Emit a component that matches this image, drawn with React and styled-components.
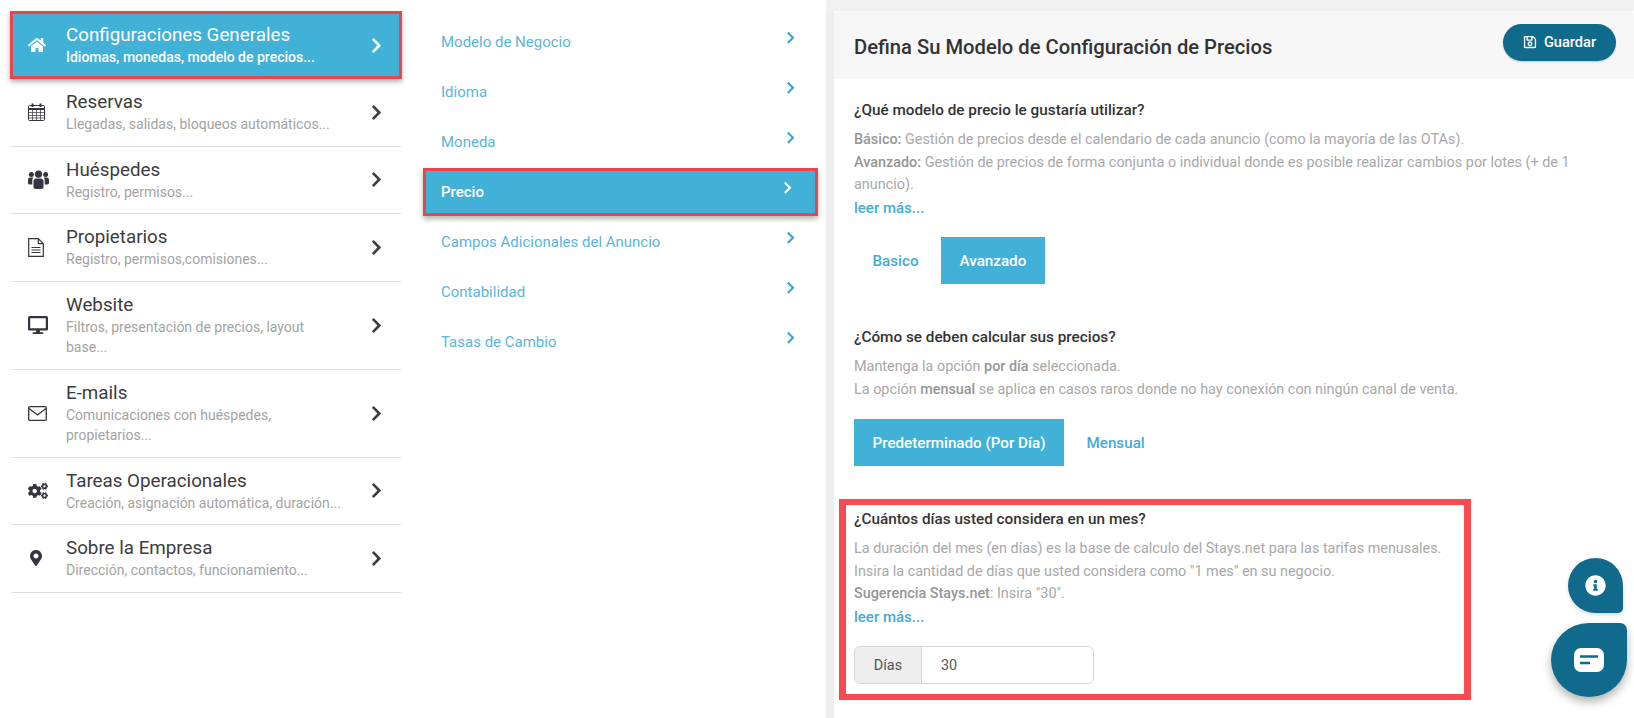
import React from 'react';
import styled, { createGlobalStyle } from 'styled-components';
import {
  FaHome,
  FaDesktop,
  FaCogs,
  FaMapMarkerAlt,
  FaChevronRight,
  FaRegSave,
  FaInfoCircle,
} from 'react-icons/fa';

const GlobalStyle = createGlobalStyle`
  html, body {
    margin: 0;
    background: #fff;
    font-family: Roboto, "Liberation Sans", sans-serif;
  }
  * { box-sizing: border-box; }
`;

const Page = styled.div`
  display: flex;
  height: 718px;
  overflow: hidden;
`;

const MainNav = styled.nav`
  width: 392px;
  margin: 11px 0 0 10px;
  flex: none;
`;

const NavRow = styled.div`
  display: flex;
  align-items: center;
  padding: ${(p) => (p.$active ? '8px 0' : '11px 0')};
  height: ${(p) => (p.$active ? '68px' : 'auto')};
  background: ${(p) => (p.$active ? '#42b1d8' : 'transparent')};
  color: ${(p) => (p.$active ? '#fff' : '#3c3c3c')};
  border: ${(p) => (p.$active ? '3px solid #e8454d' : 'none')};
  border-bottom: ${(p) => (p.$active ? '3px solid #e8454d' : '1px solid #dedede')};
  margin: 0 ${(p) => (p.$active ? '0' : '1px')};
  box-shadow: ${(p) => (p.$active ? '0 3px 5px rgba(0, 0, 0, 0.3)' : 'none')};
`;

const NavIcon = styled.div`
  width: ${(p) => (p.$active ? '53px' : '55px')};
  padding-left: ${(p) => (p.$active ? '15px' : '17px')};
  flex: none;
  display: flex;
  align-items: center;
  font-size: 18px;
  color: ${(p) => (p.$active ? '#fff' : '#35353f')};
`;

const NavText = styled.div`
  flex: 1;
  max-width: 280px;
`;

const NavTitle = styled.div`
  font-size: 18.8px;
  line-height: 24px;
`;

const NavSub = styled.div`
  font-size: 14px;
  line-height: 20.5px;
  color: ${(p) => (p.$active ? '#fff' : '#a3a3a3')};
  font-weight: ${(p) => (p.$active ? 500 : 400)};
`;

const NavArrow = styled.div`
  margin-left: auto;
  padding-right: ${(p) => (p.$active ? '14px' : '16px')};
  display: flex;
  font-size: 17px;
`;

const SubNav = styled.nav`
  width: 395px;
  margin: 18px 0 0 21px;
  flex: none;
`;

const SubRow = styled.div`
  height: 48px;
  margin-bottom: 2px;
  display: flex;
  align-items: center;
  justify-content: space-between;
  padding: 0 21px 0 ${(p) => (p.$active ? '15px' : '18px')};
  font-size: 15px;
  color: ${(p) => (p.$active ? '#fff' : '#5bb5d8')};
  font-weight: ${(p) => (p.$active ? 500 : 400)};
  background: ${(p) => (p.$active ? '#42b1d8' : 'transparent')};
  border: ${(p) => (p.$active ? '3px solid #e8454d' : 'none')};
  box-shadow: ${(p) => (p.$active ? '0 3px 5px rgba(0, 0, 0, 0.3)' : 'none')};
`;

const SubArrow = styled.span`
  display: flex;
  font-size: 13.5px;
  margin-top: -8px;
  color: ${(p) => (p.$active ? '#fff' : '#3ba5cc')};
`;

const Panel = styled.main`
  flex: 1;
  margin-left: 8px;
  padding: 11px 0 0 8px;
  background: linear-gradient(#f0f0f0 0 11px, transparent 11px),
    linear-gradient(90deg, #eeeeee 0 8px, #fff 8px);
`;

const CardHeader = styled.header`
  height: 68px;
  background: #f7f7f7;
  border-radius: 4px 4px 0 0;
  display: flex;
  align-items: center;
  justify-content: space-between;
  padding: 0 18px 0 20px;
`;

const CardTitle = styled.h1`
  margin: 3px 0 0;
  font-size: 20.2px;
  font-weight: 500;
  color: #333;
`;

const SaveButton = styled.button`
  width: 113px;
  height: 37px;
  margin-top: -6px;
  border: none;
  border-radius: 19px;
  background: #0f6a8c;
  color: #fff;
  display: flex;
  align-items: center;
  justify-content: center;
  gap: 7px;
  font: 500 14.6px Roboto, sans-serif;
  box-shadow: 0 1px 2px rgba(0, 0, 0, 0.2);
`;

const CardBody = styled.div`
  padding: 20px 0 0 20px;
`;

const Section = styled.section`
  margin-bottom: 42px;
`;

const HighlightSection = styled.section`
  width: 632px;
  height: 201px;
  margin: -9px 0 0 -15px;
  border: 6px solid #f94a4f;
  border-width: 6px 7px;
  padding: 3px 0 0 8px;
`;

const Question = styled.h3`
  margin: 0 0 8px;
  font-size: 15.3px;
  line-height: 22px;
  font-weight: 500;
  color: #333;
`;

const Help = styled.p`
  margin: 0;
  font-size: 14.4px;
  line-height: 22.5px;
  color: #a8a8a8;
  white-space: nowrap;

  b {
    font-weight: 500;
    color: #969696;
  }
`;

const ReadMore = styled.a`
  display: block;
  font-size: 15px;
  line-height: 22.5px;
  font-weight: 500;
  color: #45abd2;
`;

const Choices = styled.div`
  display: flex;
  gap: 4px;
  margin-top: 18px;
`;

const Choice = styled.button`
  height: 47px;
  padding: 0 18.5px;
  border: none;
  background: ${(p) => (p.$selected ? '#42b1d8' : 'transparent')};
  color: ${(p) => (p.$selected ? '#fff' : '#45abd2')};
  font: 500 15.2px Roboto, sans-serif;
`;

const InputGroup = styled.div`
  display: flex;
  width: 240px;
  height: 38px;
  margin-top: 18px;
  border: 1px solid #d6d6d6;
  border-radius: 6px;
  overflow: hidden;
  font-size: 14.4px;
  color: #555;
`;

const Addon = styled.span`
  width: 67px;
  display: flex;
  align-items: center;
  justify-content: center;
  background: #eeeeee;
  border-right: 1px solid #d6d6d6;
`;

const Value = styled.span`
  display: flex;
  align-items: center;
  padding-left: 19px;
`;

const InfoBubble = styled.div`
  position: fixed;
  left: 1568px;
  top: 558px;
  width: 55px;
  height: 55px;
  border-radius: 50% 50% 5px 50%;
  background: #0f6a8c;
  color: #fff;
  display: flex;
  align-items: center;
  justify-content: center;
  font-size: 21px;
  box-shadow: 0 2px 4px rgba(0, 0, 0, 0.15);
`;

const ChatBubble = styled.div`
  position: fixed;
  left: 1551px;
  top: 623px;
  width: 76px;
  height: 74px;
  border-radius: 50% 7px 50% 50%;
  background: #0f6a8c;
  display: flex;
  align-items: center;
  justify-content: center;
  box-shadow: 0 5px 10px rgba(0, 0, 0, 0.3);
`;

function CalendarIcon() {
  return (
    <svg width="18" height="18" viewBox="0 0 18 18" fill="none" stroke="currentColor">
      <rect x="0.5" y="2.5" width="16" height="15" rx="1" />
      <path d="M0.5 6h16" strokeWidth="2" />
      <path d="M0.5 9.5h16M0.5 12.5h16M0.5 15h16M4.5 6v11M8.5 6v11M12.5 6v11" strokeWidth="0.7" />
      <path d="M4.5 0.5v3.5M12.5 0.5v3.5" strokeWidth="2" />
    </svg>
  );
}

function UsersIcon() {
  return (
    <svg width="21" height="19" viewBox="0 0 21 19" fill="currentColor">
      <circle cx="10.5" cy="4.2" r="3.6" />
      <circle cx="3.4" cy="4.4" r="2.5" />
      <circle cx="17.6" cy="4.4" r="2.5" />
      <path d="M5.5 11c0-1.8 1.5-2.6 2.7-2.6h4.6c1.200 0 2.700.8 2.700 2.600v6c0 1.200-1 2-2.200 2H7.700c-1.200 0-2.200-.8-2.200-2z" />
      <path d="M0 10c0-1.600 1.200-2.400 2.300-2.400h2.800c-.3.700-.8 1.400-.8 3.400v3.400H1.400C.6 14.400 0 13.800 0 13z" />
      <path d="M21 10c0-1.600-1.200-2.400-2.300-2.400h-2.800c.3.700.8 1.400.8 3.400v3.400h2.900c.8 0 1.400-.6 1.400-1.400z" />
    </svg>
  );
}

function FileIcon() {
  return (
    <svg width="16" height="19" viewBox="0 0 16 19" fill="none" stroke="currentColor" strokeWidth="1.2">
      <path d="M0.700 0.700h9.600l5 5v12.600H0.700z" />
      <path d="M10.300 0.700v5h5" />
      <path d="M3.500 9.500h9M3.500 12h9M3.500 14.500h9" />
    </svg>
  );
}

function EnvelopeIcon() {
  return (
    <svg width="19" height="15" viewBox="0 0 19 15" fill="none" stroke="currentColor" strokeWidth="1.300">
      <rect x="0.700" y="0.700" width="17.600" height="13.600" rx="1.200" />
      <path d="M1 2.500l8.500 6.500 8.500-6.500" />
    </svg>
  );
}

function ChatIcon() {
  return (
    <svg width="30" height="24" viewBox="0 0 30 24">
      <rect x="0" y="0" width="30" height="24" rx="7" fill="#fff" />
      <path d="M6 8.500h18M6 15h10" stroke="#0f6a8c" strokeWidth="2.400" />
    </svg>
  );
}

const mainItems = [
  { title: 'Configuraciones Generales', sub: 'Idiomas, monedas, modelo de precios...', icon: <FaHome />, active: true },
  { title: 'Reservas', sub: 'Llegadas, salidas, bloqueos automáticos...', icon: <CalendarIcon /> },
  { title: 'Huéspedes', sub: 'Registro, permisos...', icon: <UsersIcon /> },
  { title: 'Propietarios', sub: 'Registro, permisos,comisiones...', icon: <FileIcon /> },
  { title: 'Website', sub: 'Filtros, presentación de precios, layout base...', icon: <FaDesktop size={20} /> },
  { title: 'E-mails', sub: 'Comunicaciones con huéspedes, propietarios...', icon: <EnvelopeIcon /> },
  { title: 'Tareas Operacionales', sub: 'Creación, asignación automática, duración...', icon: <FaCogs size={20} /> },
  { title: 'Sobre la Empresa', sub: 'Dirección, contactos, funcionamiento...', icon: <FaMapMarkerAlt size={16} /> },
];

const subItems = [
  'Modelo de Negocio',
  'Idioma',
  'Moneda',
  'Precio',
  'Campos Adicionales del Anuncio',
  'Contabilidad',
  'Tasas de Cambio',
];

export default function App() {
  return (
    <>
      <GlobalStyle />
      <Page>
        <MainNav>
          {mainItems.map((item) => (
            <NavRow key={item.title} $active={item.active}>
              <NavIcon $active={item.active}>{item.icon}</NavIcon>
              <NavText>
                <NavTitle>{item.title}</NavTitle>
                <NavSub $active={item.active}>{item.sub}</NavSub>
              </NavText>
              <NavArrow $active={item.active}>
                <FaChevronRight />
              </NavArrow>
            </NavRow>
          ))}
        </MainNav>

        <SubNav>
          {subItems.map((name) => (
            <SubRow key={name} $active={name === 'Precio'}>
              {name}
              <SubArrow $active={name === 'Precio'}>
                <FaChevronRight />
              </SubArrow>
            </SubRow>
          ))}
        </SubNav>

        <Panel>
          <CardHeader>
            <CardTitle>Defina Su Modelo de Configuración de Precios</CardTitle>
            <SaveButton>
              <FaRegSave size={14} />
              Guardar
            </SaveButton>
          </CardHeader>
          <CardBody>
            <Section>
              <Question>¿Qué modelo de precio le gustaría utilizar?</Question>
              <Help>
                <b>Básico:</b> Gestión de precios desde el calendario de cada anuncio (como la mayoría de las OTAs).
                <br />
                <b>Avanzado:</b> Gestión de precios de forma conjunta o individual donde es posible realizar cambios por lotes (+ de 1
                <br />
                anuncio).
              </Help>
              <ReadMore>leer más...</ReadMore>
              <Choices>
                <Choice>Basico</Choice>
                <Choice $selected>Avanzado</Choice>
              </Choices>
            </Section>

            <Section>
              <Question>¿Cómo se deben calcular sus precios?</Question>
              <Help>
                Mantenga la opción <b>por día</b> seleccionada.
                <br />
                La opción <b>mensual</b> se aplica en casos raros donde no hay conexión con ningún canal de venta.
              </Help>
              <Choices>
                <Choice $selected>Predeterminado (Por Día)</Choice>
                <Choice>Mensual</Choice>
              </Choices>
            </Section>

            <HighlightSection>
              <Question>¿Cuántos días usted considera en un mes?</Question>
              <Help>
                La duración del mes (en días) es la base de calculo del Stays.net para las tarifas menusales.
                <br />
                Insira la cantidad de días que usted considera como "1 mes" en su negocio.
                <br />
                <b>Sugerencia Stays.net</b>: Insira "30".
              </Help>
              <ReadMore>leer más...</ReadMore>
              <InputGroup>
                <Addon>Días</Addon>
                <Value>30</Value>
              </InputGroup>
            </HighlightSection>
          </CardBody>
        </Panel>
      </Page>
      <InfoBubble>
        <FaInfoCircle />
      </InfoBubble>
      <ChatBubble>
        <ChatIcon />
      </ChatBubble>
    </>
  );
}
